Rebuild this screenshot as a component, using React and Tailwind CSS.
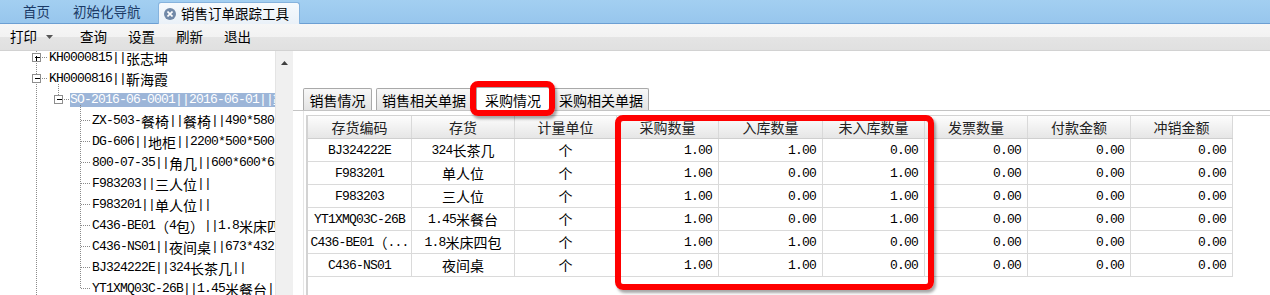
import React from 'react';

const CJK = /([\u3000-\u303f\u4e00-\u9fff\uff00-\uffef]+)/;

// ascii in a narrow mono, CJK runs a bit larger, like SimSun in the original
function Mixed({ text }) {
  return text.split(CJK).map((part, i) =>
    i % 2 ? (
      <span key={i} className="font-['Noto_Sans_CJK_SC'] text-[14px] tracking-normal">
        {part}
      </span>
    ) : (
      part
    )
  );
}

const mono = "font-['Liberation_Mono','Noto_Sans_CJK_SC',monospace] text-[13px] tracking-[-0.8px]";

const treeRows = [
  { text: 'KH0000815||张志坤', pad: 'pl-[49px]' },
  { text: 'KH0000816||靳海霞', pad: 'pl-[49px]' },
  { text: 'SO-2016-06-0001||2016-06-01||靳海霞', pad: 'pl-[70px]', selected: true },
  { text: 'ZX-503-餐椅||餐椅||490*580*450', pad: 'pl-[92px]' },
  { text: 'DG-606||地柜||2200*500*500', pad: 'pl-[92px]' },
  { text: '800-07-35||角几||600*600*650', pad: 'pl-[92px]' },
  { text: 'F983203||三人位||', pad: 'pl-[92px]' },
  { text: 'F983201||单人位||', pad: 'pl-[92px]' },
  { text: 'C436-BE01（4包）||1.8米床四包', pad: 'pl-[92px]' },
  { text: 'C436-NS01||夜间桌||673*432*560', pad: 'pl-[92px]' },
  { text: 'BJ324222E||324长茶几||', pad: 'pl-[92px]' },
  { text: 'YT1XMQ03C-26B||1.45米餐台||', pad: 'pl-[92px]' },
];

const childCenters = [70, 91, 112, 133, 154, 175, 196, 217, 238];

function Box({ cx, cy, plus }) {
  return (
    <g shapeRendering="crispEdges">
      <rect x={cx - 4.5} y={cy - 4.5} width="8" height="8" fill="#fff" stroke="#8e8e8e" />
      <line x1={cx - 2.5} y1={cy - 0.5} x2={cx + 2.5} y2={cy - 0.5} stroke="#000" />
      {plus && <line x1={cx - 0.5} y1={cy - 2.5} x2={cx - 0.5} y2={cy + 2.5} stroke="#000" />}
    </g>
  );
}

function TreeLines() {
  const d = { stroke: '#8a8a8a', strokeDasharray: '1 1', shapeRendering: 'crispEdges' };
  return (
    <svg className="absolute left-0 top-0 pointer-events-none" width="275" height="244">
      <line x1="36.5" y1="0" x2="36.5" y2="2" {...d} />
      <line x1="36.5" y1="12" x2="36.5" y2="23" {...d} />
      <line x1="36.5" y1="33" x2="36.5" y2="244" {...d} />
      <line x1="42" y1="6.5" x2="48" y2="6.5" {...d} />
      <line x1="42" y1="27.5" x2="48" y2="27.5" {...d} />
      <line x1="58.5" y1="33" x2="58.5" y2="44" {...d} />
      <line x1="64" y1="48.5" x2="69" y2="48.5" {...d} />
      <line x1="80.5" y1="54" x2="80.5" y2="238" {...d} />
      {childCenters.map((y) => (
        <line key={y} x1="81" y1={y - 0.5} x2="90" y2={y - 0.5} {...d} />
      ))}
      <Box cx={37} cy={7} plus />
      <Box cx={37} cy={28} />
      <Box cx={59} cy={49} />
    </svg>
  );
}

const colW = ['w-[104px]', 'w-[103px]', 'w-[102px]', 'w-[102px]', 'w-[104px]', 'w-[102px]', 'w-[103px]', 'w-[103px]', 'w-[102px]'];
const headers = ['存货编码', '存货', '计量单位', '采购数量', '入库数量', '未入库数量', '发票数量', '付款金额', '冲销金额'];
const rows = [
  ['BJ324222E', '324长茶几', '个', '1.00', '1.00', '0.00', '0.00', '0.00', '0.00'],
  ['F983201', '单人位', '个', '1.00', '0.00', '1.00', '0.00', '0.00', '0.00'],
  ['F983203', '三人位', '个', '1.00', '0.00', '1.00', '0.00', '0.00', '0.00'],
  ['YT1XMQ03C-26B', '1.45米餐台', '个', '1.00', '0.00', '1.00', '0.00', '0.00', '0.00'],
  ['C436-BE01（...', '1.8米床四包', '个', '1.00', '1.00', '0.00', '0.00', '0.00', '0.00'],
  ['C436-NS01', '夜间桌', '个', '1.00', '1.00', '0.00', '0.00', '0.00', '0.00'],
];

function SubTab({ label, active, w }) {
  return (
    <div
      className={`${w} h-[22px] flex items-center justify-center border border-b-0 border-[#a9a9a9] rounded-t-[2px] text-[14px] text-black ${
        active ? 'bg-white h-[24px] -mb-px relative' : 'bg-[linear-gradient(#f8f8f8,#e3e3e3)]'
      }`}
    >
      {label}
    </div>
  );
}

export default function App() {
  return (
    <div className="relative w-[1270px] h-[295px] overflow-hidden bg-white font-['Noto_Sans_CJK_SC',sans-serif] leading-none">
      {/* window tabs */}
      <div className="h-[24px] flex items-end bg-[linear-gradient(#a3cff1,#97c6ed)] border-b border-[#6c9fd3] text-[13.5px]">
        <div className="w-[62px] h-[22px] flex items-center pl-[23px] text-[#1b3a66]">首页</div>
        <div className="w-[96px] h-[22px] flex items-center pl-[11px] text-[#1b3a66]">初始化导航</div>
        <div className="w-[142px] h-[22px] -mb-px flex items-center pl-[5px] bg-[linear-gradient(#f6fafd,#eaf1f8)] border border-b-0 border-[#86b3dd] rounded-t-[3px] text-black">
          <span className="w-[12px] h-[12px] rounded-full bg-[#7189a8] flex items-center justify-center">
            <svg width="6" height="6" viewBox="0 0 6 6">
              <path d="M0.5 0.5L5.5 5.5M5.5 0.5L0.5 5.5" stroke="#fff" strokeWidth="1.6" />
            </svg>
          </span>
          <span className="ml-[5px]">销售订单跟踪工具</span>
        </div>
      </div>

      {/* toolbar */}
      <div className="h-[27px] flex items-center border-b border-[#d2d2d2] bg-[linear-gradient(#f6f6f6_0%,#f2f2f2_50%,#e4e4e4_50%,#e0e0e0_100%)] text-[13.5px] text-black">
        <span className="ml-[10px]">打印</span>
        <svg className="ml-[9px]" width="7" height="4" viewBox="0 0 7 4">
          <path d="M0 0H7L3.5 4Z" fill="#555" />
        </svg>
        <div className="ml-[27px] flex gap-[21px]">
          <span>查询</span>
          <span>设置</span>
          <span>刷新</span>
          <span>退出</span>
        </div>
      </div>

      <div className="flex h-[244px]">
        {/* tree */}
        <div className="relative w-[275px] shrink-0 overflow-hidden">
          <div className="-mt-[4px]">
            {treeRows.map((r) => (
              <div key={r.text} className={`h-[21px] flex items-center whitespace-nowrap ${r.pad} ${mono} text-black`}>
                {r.selected ? (
                  <span className="h-[14px] flex items-center bg-[#9cb5d8] text-white">
                    <Mixed text={r.text} />
                  </span>
                ) : (
                  <Mixed text={r.text} />
                )}
              </div>
            ))}
          </div>
          <TreeLines />
        </div>

        {/* scrollbar */}
        <div className="w-[18px] shrink-0 bg-[#f0f0f0] border-l border-[#e4e4e4] flex justify-center pt-[10px]">
          <svg width="7" height="4" viewBox="0 0 7 4">
            <path d="M3.5 0L7 4H0Z" fill="#404040" />
          </svg>
        </div>

        {/* right panel */}
        <div className="flex-1 flex flex-col pt-[37px]">
          <div className="flex items-end h-[23px] pl-[10px] border-b border-[#c4c4c4]">
            <SubTab label="销售情况" w="w-[69px]" />
            <div className="w-[4px]" />
            <SubTab label="销售相关单据" w="w-[96px]" />
            <div className="w-[4px]" />
            <SubTab label="采购情况" w="w-[74px]" active />
            <div className="w-[3px]" />
            <SubTab label="采购相关单据" w="w-[96px]" />
          </div>
          <div className="flex-1 ml-[10px] border-l border-[#e6e6e6] pl-[2px] pt-[4px]">
            <div className="h-full border-l-2 border-t border-[#d3d3d3]">
              <div className="flex h-[23px] border-b border-[#cfcfcf] w-[925px] bg-[linear-gradient(#fdfdfd,#e6e6e6)]">
                {headers.map((h, i) => (
                  <div key={h} className={`${colW[i]} shrink-0 flex items-center justify-center border-r border-[#d9d9d9] text-[14px] text-[#222]`}>
                    {h}
                  </div>
                ))}
              </div>
              {rows.map((r, ri) => (
                <div key={ri} className="flex h-[23px] w-[925px] border-b border-[#dadada]">
                  {r.map((c, i) => (
                    <div
                      key={i}
                      className={`${colW[i]} shrink-0 flex items-center border-r border-[#dadada] whitespace-nowrap overflow-hidden ${mono} text-black ${
                        i < 3 ? 'justify-center' : 'justify-end pr-[6px]'
                      }`}
                    >
                      <Mixed text={c} />
                    </div>
                  ))}
                </div>
              ))}
            </div>
          </div>
        </div>
      </div>

      {/* red highlight marks */}
      <div className="absolute left-[470px] top-[81px] w-[85px] h-[35px] border-[6px] border-[#ff0000] rounded-[8px] shadow-[2px_3px_3px_rgba(0,0,0,0.35)]" />
      <div className="absolute left-[615px] top-[115px] w-[319px] h-[175px] border-[6px] border-[#ff0000] rounded-[8px] shadow-[2px_3px_3px_rgba(0,0,0,0.35)]" />
    </div>
  );
}
